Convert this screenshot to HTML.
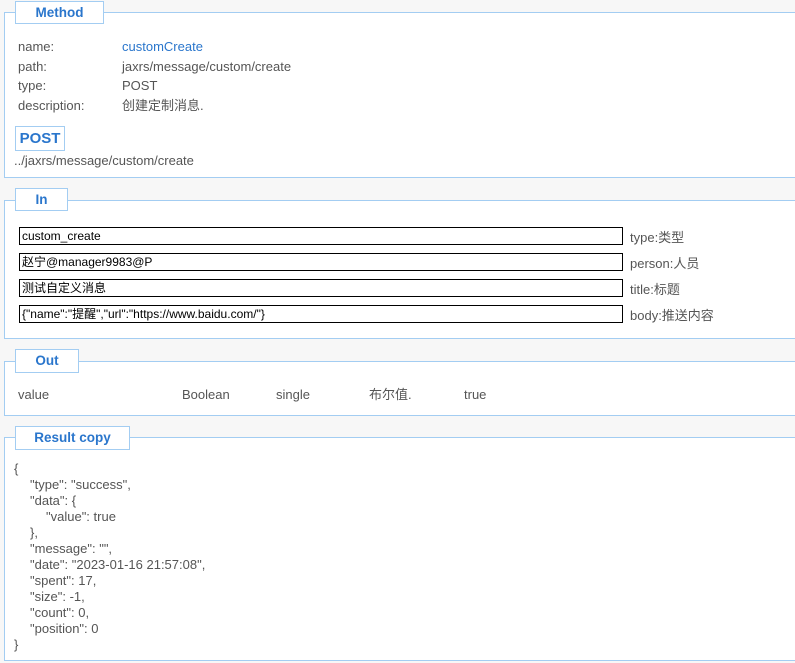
<!DOCTYPE html>
<html><head><meta charset="utf-8"><style>
*{margin:0;padding:0;box-sizing:border-box}
body{width:795px;height:663px;background:#f7f7f7;position:relative;overflow:hidden;font-family:"Liberation Sans","Noto Sans CJK SC",sans-serif;font-size:13px;color:#555}
.box{position:absolute;left:4px;width:800px;background:#fff;border:1px solid #a3cdf2;border-right:none}
.lg{position:absolute;background:#fff;border:1px solid #a3cdf2;color:#2a76cc;font-weight:bold;font-size:13.5px;text-align:center}
.t{position:absolute;white-space:nowrap;line-height:16px}
.inp{position:absolute;left:19px;width:604px;height:18px;border:1px solid #000;color:#000;font-size:12px;line-height:16px;padding-left:2px;white-space:nowrap;font-family:"Liberation Sans","Noto Sans CJK SC",sans-serif}
</style></head><body>
<div class="box" style="top:12px;height:166px"></div>
<div class="lg" style="left:15px;top:1px;width:89px;height:23px;line-height:21px">Method</div>
<div class="t" style="left:18px;top:39px">name:</div><div class="t" style="left:122px;top:39px;color:#2a76cc">customCreate</div>
<div class="t" style="left:18px;top:59px">path:</div><div class="t" style="left:122px;top:59px">jaxrs/message/custom/create</div>
<div class="t" style="left:18px;top:78px">type:</div><div class="t" style="left:122px;top:78px">POST</div>
<div class="t" style="left:18px;top:98px">description:</div><div class="t" style="left:122px;top:98px">创建定制消息.</div>
<div class="lg" style="left:15px;top:126px;width:50px;height:25px;line-height:23px;font-size:15px">POST</div>
<div class="t" style="left:14px;top:153px">../jaxrs/message/custom/create</div>

<div class="box" style="top:200px;height:139px"></div>
<div class="lg" style="left:15px;top:188px;width:53px;height:23px;line-height:21px">In</div>
<div class="inp" style="top:227px">custom_create</div><div class="t" style="left:630px;top:230px">type:类型</div>
<div class="inp" style="top:253px">赵宁@manager9983@P</div><div class="t" style="left:630px;top:256px">person:人员</div>
<div class="inp" style="top:279px">测试自定义消息</div><div class="t" style="left:630px;top:282px">title:标题</div>
<div class="inp" style="top:305px">{"name":"提醒","url":"https://www.baidu.com/"}</div><div class="t" style="left:630px;top:308px">body:推送内容</div>

<div class="box" style="top:361px;height:55px"></div>
<div class="lg" style="left:15px;top:349px;width:64px;height:24px;line-height:22px">Out</div>
<div class="t" style="left:18px;top:387px">value</div>
<div class="t" style="left:182px;top:387px">Boolean</div>
<div class="t" style="left:276px;top:387px">single</div>
<div class="t" style="left:369px;top:387px">布尔值.</div>
<div class="t" style="left:464px;top:387px">true</div>

<div class="box" style="top:437px;height:224px"></div>
<div class="lg" style="left:15px;top:426px;width:115px;height:24px;line-height:22px">Result copy</div>
<div class="t" style="left:14px;top:461px">{</div>
<div class="t" style="left:30px;top:477px">"type": "success",</div>
<div class="t" style="left:30px;top:493px">"data": {</div>
<div class="t" style="left:46px;top:509px">"value": true</div>
<div class="t" style="left:30px;top:525px">},</div>
<div class="t" style="left:30px;top:541px">"message": "",</div>
<div class="t" style="left:30px;top:557px">"date": "2023-01-16 21:57:08",</div>
<div class="t" style="left:30px;top:573px">"spent": 17,</div>
<div class="t" style="left:30px;top:589px">"size": -1,</div>
<div class="t" style="left:30px;top:605px">"count": 0,</div>
<div class="t" style="left:30px;top:621px">"position": 0</div>
<div class="t" style="left:14px;top:637px">}</div>
</body></html>
